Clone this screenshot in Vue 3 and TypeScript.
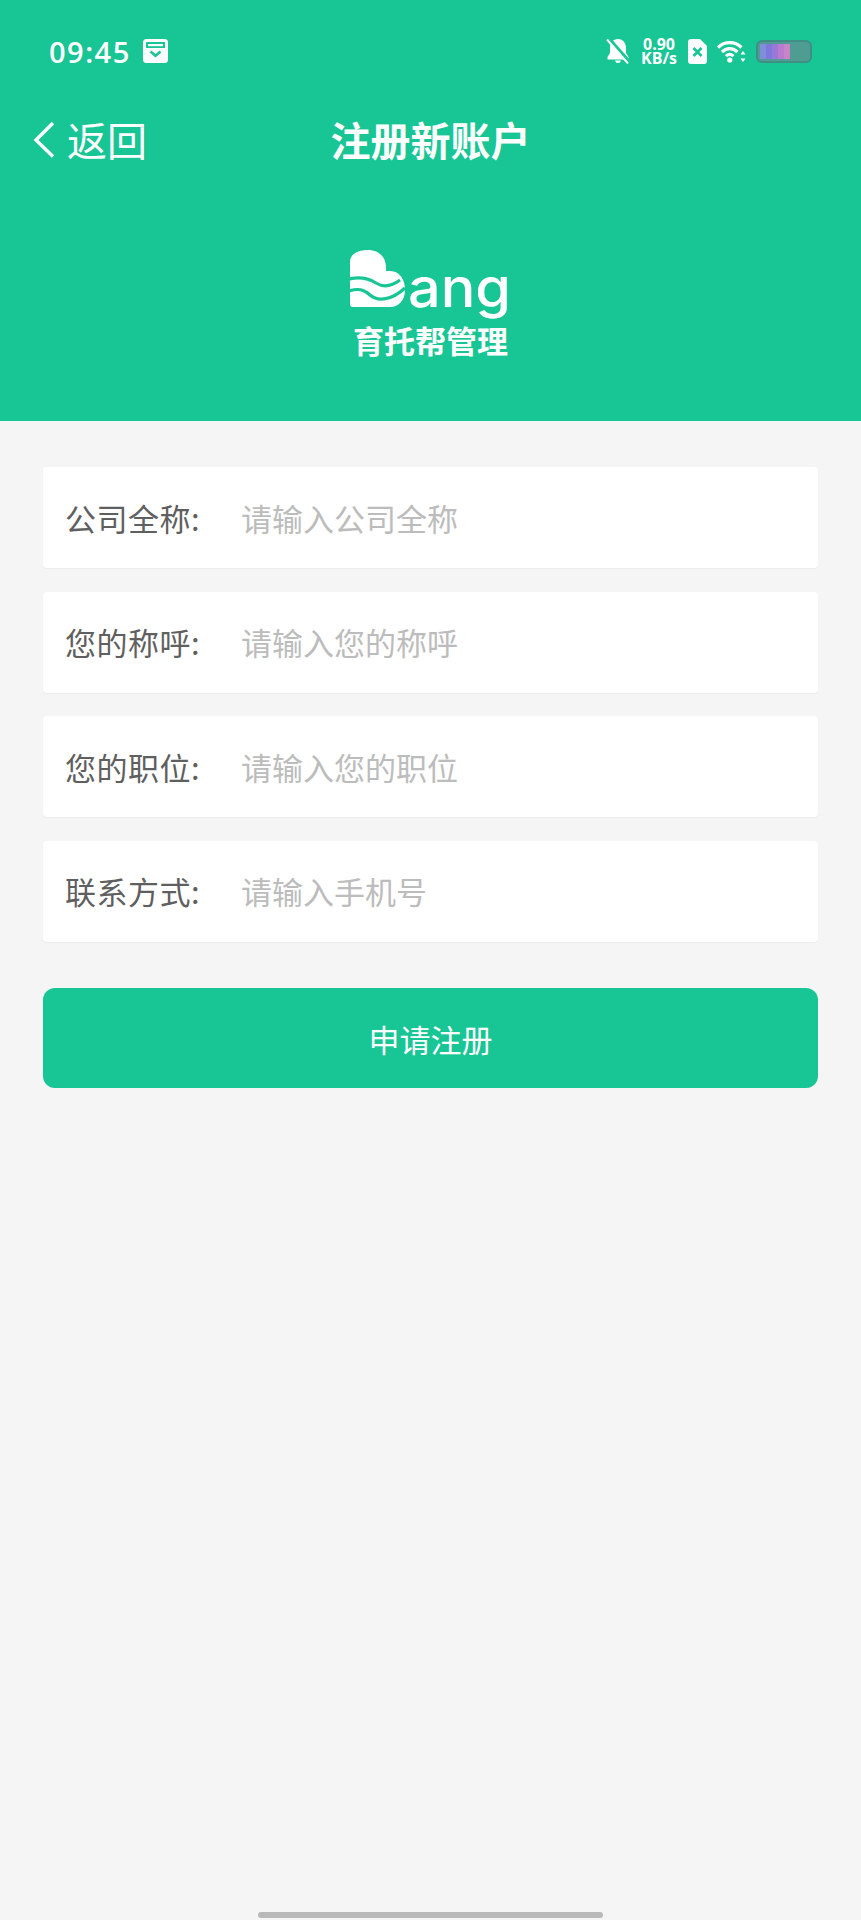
<script setup lang="ts">
interface Field {
  label: string;
  placeholder: string;
}

const fields: Field[] = [
  { label: '公司全称:', placeholder: '请输入公司全称' },
  { label: '您的称呼:', placeholder: '请输入您的称呼' },
  { label: '您的职位:', placeholder: '请输入您的职位' },
  { label: '联系方式:', placeholder: '请输入手机号' },
];

const batteryBars = ['#7e8fd8', '#7d78de', '#9a78d6', '#b97bd0', '#c884c8'];
</script>

<template>
  <div class="page">
    <header class="top">
      <div class="status">
        <div class="status-left">
          <span class="time">09:45</span>
          <svg class="box-icon" width="25" height="24" viewBox="0 0 25 24">
            <rect width="25" height="24" rx="3.500" fill="#fff" />
            <path fill="#18c594" d="M4 3h17a1 1 0 0 1 1 1v5H3V4a1 1 0 0 1 1-1z" />
            <rect x="5" y="5" width="15" height="2.200" fill="#fff" />
            <path fill="none" stroke="#18c594" stroke-width="2.600" d="M7.500 12.500l5 4.200 5-4.200" />
          </svg>
        </div>
        <div class="status-right">
          <svg width="24" height="26" viewBox="0 0 24 26">
            <path fill="#fff" d="M12 1C7 1 4 5 4 10v5l-2.500 4v2.500h21V19L20 15v-5c0-5-3-9-8-9zM9 22.500h6c-.4 1.700-1.500 2.500-3 2.500s-2.600-.8-3-2.500z" />
            <path stroke="#18c594" stroke-width="4" d="M2 0l21 24" />
            <path stroke="#fff" stroke-width="2" d="M1 1.500l21 24" />
          </svg>
          <div class="speed">0.90<br />KB/s</div>
          <svg width="19" height="25" viewBox="0 0 19 25">
            <path fill="#fff" d="M3 0h9l7 7v15a3 3 0 0 1-3 3H3a3 3 0 0 1-3-3V3a3 3 0 0 1 3-3z" />
            <path stroke="#18c594" stroke-width="2.600" d="M5.500 9l8 8M13.500 9l-8 8" />
          </svg>
          <svg width="29" height="23" viewBox="0 0 29 23">
            <path fill="none" stroke="#fff" stroke-width="3.200" d="M1 7.500c6.500-6.500 17-6.500 23.500 0M5 12c4.500-4.500 11-4.500 15.500 0M9 16.200c2.300-2.200 5.200-2.200 7.500 0" />
            <circle cx="12.800" cy="20" r="2.600" fill="#fff" />
            <path fill="#fff" d="M26 11l2.500 3.500h-5zM26 22l-2.500-3.500h5z" />
          </svg>
          <div class="battery">
            <span v-for="(color, i) in batteryBars" :key="i" class="battery-bar" :style="{ background: color }"></span>
          </div>
        </div>
      </div>

      <nav class="nav">
        <div class="back">
          <svg width="22" height="37" viewBox="0 0 22 37">
            <path fill="none" stroke="#fff" stroke-width="3.400" d="M20 2L3 19l17 16.500" />
          </svg>
          <span>返回</span>
        </div>
        <h1 class="title">注册新账户</h1>
        <div></div>
      </nav>

      <div class="brand">
        <svg class="logo" width="162" height="72" viewBox="0 0 162 72">
          <path fill="#fff" d="M0 54V12C0 4 8 0 18 0c12 0 19 8 18 21h4c10 0 15 9 15 19s-6 17-15 17H3c-2 0-3-1-3-3z" />
          <path fill="none" stroke="#18c594" stroke-width="3.200" d="M-1 29c9-2 19-1 27 4 8 5 16 3 24-3" />
          <path fill="none" stroke="#18c594" stroke-width="3.200" d="M-1 41c9-3 15-2 21 4 8 7 22 5 35-7" />
          <text class="logo-letters" x="58" y="57" textLength="103" lengthAdjust="spacingAndGlyphs">ang</text>
        </svg>
        <div class="brand-name">育托帮管理</div>
      </div>
    </header>

    <main class="content">
      <label v-for="field in fields" :key="field.label" class="row">
        <span class="row-label">{{ field.label }}</span>
        <input class="row-input" type="text" :placeholder="field.placeholder" />
      </label>
      <button class="submit" type="button">申请注册</button>
    </main>

    <div class="home-bar"></div>
  </div>
</template>

<style scoped>
.page {
  display: flex;
  flex-direction: column;
  height: 1920px;
  background: #f5f5f6;
  font-family: "Noto Sans CJK SC", "Liberation Sans", sans-serif;
}

.top {
  height: 421px;
  box-sizing: border-box;
  background: #18c594;
  color: #fff;
}

.status {
  display: flex;
  justify-content: space-between;
  align-items: center;
  height: 50px;
  padding: 26px 49px 0 49px;
}

.status-left {
  display: flex;
  align-items: center;
  gap: 12px;
}

.time {
  font-family: "Open Sans", sans-serif;
  font-size: 29px;
  font-weight: 600;
  letter-spacing: 1.500px;
}

.status-right {
  display: flex;
  align-items: center;
  gap: 10px;
}

.speed {
  width: 38px;
  font-family: "Open Sans", sans-serif;
  font-size: 16px;
  font-weight: 700;
  line-height: 14px;
  text-align: center;
}

.battery {
  display: flex;
  box-sizing: border-box;
  width: 56px;
  height: 23px;
  padding: 2px;
  border: 2px solid #3f8f86;
  border-radius: 6px;
  background: #4f9c92;
}

.battery-bar {
  width: 6px;
}

.nav {
  display: grid;
  grid-template-columns: 1fr auto 1fr;
  align-items: center;
  height: 58px;
  margin-top: 34px;
  padding: 0 33px;
}

.back {
  display: flex;
  align-items: center;
  gap: 12px;
  font-size: 40px;
}

.title {
  margin: 0;
  font-size: 40px;
  font-weight: 700;
}

.brand {
  display: flex;
  flex-direction: column;
  align-items: center;
  margin-top: 82px;
}

.logo {
  display: block;
}

.logo-letters {
  fill: #fff;
  font-family: Inter, sans-serif;
  font-size: 54px;
  font-weight: 500;
}

.brand-name {
  margin-top: 0;
  font-size: 31px;
  font-weight: 700;
  line-height: 36px;
}

.content {
  display: flex;
  flex-direction: column;
  gap: 23.500px;
  padding: 46px 43px 0;
}

.row {
  display: flex;
  align-items: center;
  height: 101px;
  box-sizing: border-box;
  padding: 0 22px;
  background: #fff;
  border-radius: 4px;
  box-shadow: 0 1px 1px #ebebeb;
}

.row-label {
  flex: none;
  width: 176px;
  color: #5f5f5f;
  font-size: 31px;
  line-height: 40px;
  letter-spacing: 0.500px;
}

.row-input {
  flex: 1;
  min-width: 0;
  height: 40px;
  padding: 0;
  border: none;
  outline: none;
  background: transparent;
  font: inherit;
  font-size: 31px;
  line-height: 40px;
}

.row-input::placeholder {
  color: #bcbcbc;
  opacity: 1;
}

.submit {
  height: 100px;
  margin-top: 23px;
  border: none;
  border-radius: 12px;
  background: #18c594;
  color: #fff;
  font: inherit;
  font-size: 31px;
}

.home-bar {
  align-self: center;
  width: 345px;
  height: 6px;
  margin-top: auto;
  margin-bottom: 2px;
  border-radius: 3px;
  background: #b8b8b8;
}
</style>

<style>
body {
  background: #f5f5f6;
}
</style>
